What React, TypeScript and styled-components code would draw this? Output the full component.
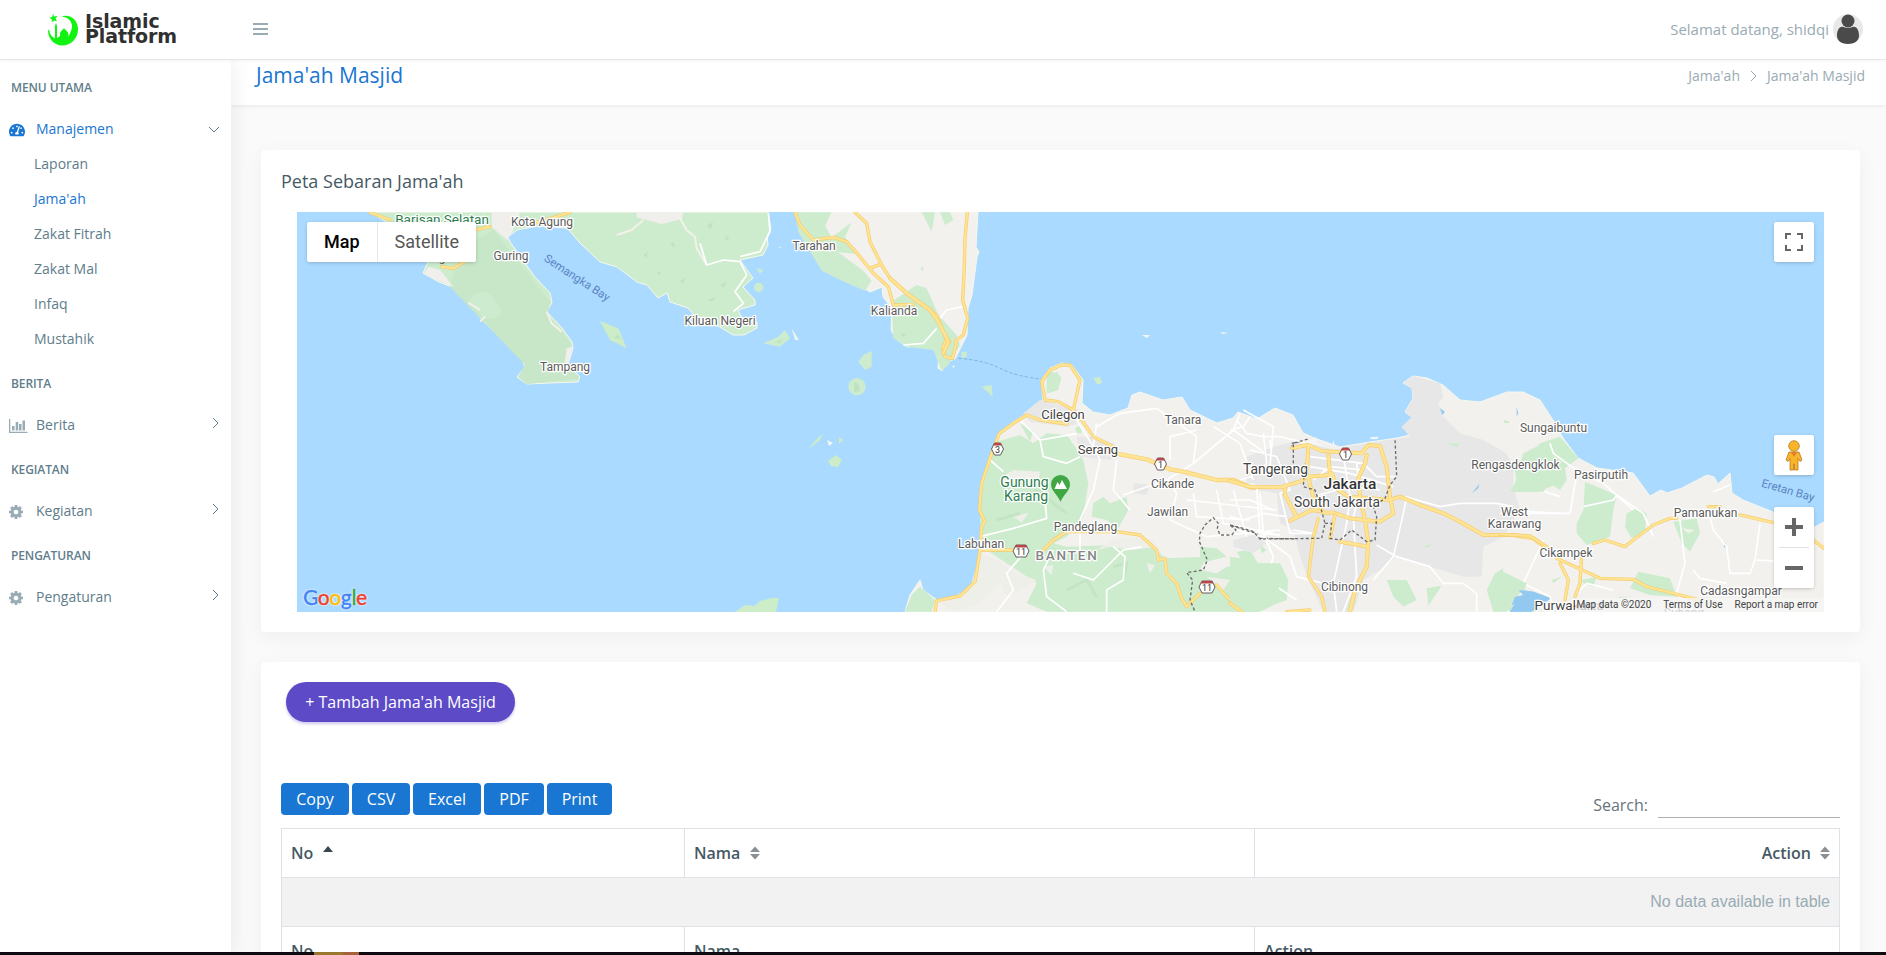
import React from "react";
import styled, { createGlobalStyle } from "styled-components";
import { FaTachometerAlt } from "react-icons/fa";

const Global = createGlobalStyle`
  * { box-sizing: border-box; }
  html, body { margin: 0; height: 955px; overflow: hidden; background: #fafafa; }
  body { font-family: "Open Sans", "Noto Sans", sans-serif; font-size: 16px; color: #455a64; }
`;

const Page = styled.div`display: flex; flex-direction: column; height: 955px; overflow: hidden;`;
const TopBar = styled.header`
  display: flex; align-items: center; height: 60px; flex: none; background: #fff; position: relative; z-index: 3;
  border-bottom: 1px solid #e6e8e9; box-shadow: 0 1px 3px rgba(0,0,0,.05);
`;
const Brand = styled.div`width: 231px; padding-left: 47px; display: flex; align-items: center; gap: 6px;`;
const BrandName = styled.div`
  font: bold 19px/15px "DejaVu Sans", sans-serif; color: #303030; letter-spacing: -.1px; white-space: pre; padding-bottom: 1px;
`;
const MenuButton = styled.button`
  border: 0; padding: 0; background: none; margin-left: 22px; width: 15px; display: grid; gap: 3px;
  margin-top: -2px;
  i { height: 2px; background: #99abb4; }
`;
const Welcome = styled.div`
  margin-left: auto; margin-right: 23px; display: flex; align-items: center; gap: 4px; color: #99abb4; font-size: 15px;
  span { padding-bottom: 2px; }
`;
const Body = styled.div`display: flex; flex: 1; min-height: 0;`;
const Sidebar = styled.nav`
  width: 231px; flex: none; background: #fff; box-shadow: 1px 0 20px rgba(0,0,0,.08); z-index: 2; padding-top: 9px;
  font-size: 14px; color: #607d8b;
`;
const Group = styled.div`height: 38px; line-height: 37px; padding-left: 11px; font-size: 12px; font-weight: 600; color: #607d8b; margin-bottom: 3px;
  letter-spacing: -.1px;`;
const Item = styled.a<{ $active?: boolean }>`
  display: grid; grid-template-columns: 27px 1fr 17px; align-items: center; height: 37px; padding: 0 6px 0 9px;
  margin-bottom: 8px; color: ${p => (p.$active ? "#1976d2" : "#607d8b")};
  .ico { color: ${p => (p.$active ? "#1976d2" : "#99abb4")}; display: block; margin-top: 3px; }
`;
const SubList = styled.div`margin-top: -9px; padding-bottom: 9px;`;
const Sub = styled.a<{ $active?: boolean }>`
  display: block; height: 35px; line-height: 35px; padding-left: 34px; color: ${p => (p.$active ? "#1976d2" : "#607d8b")};
`;
const Main = styled.main`flex: 1; min-width: 0; display: flex; flex-direction: column;`;
const TitleBar = styled.div`
  height: 45px; flex: none; background: #fff; box-shadow: 1px 0 5px rgba(0,0,0,.1); padding: 0 21px 15px 25px;
  display: flex; align-items: center; justify-content: space-between; color: #99abb4; font-size: 14px;
`;
const Title = styled.h1`margin: 0; font-size: 21px; font-weight: 400; line-height: 28px; color: #1976d2;`;
const Crumbs = styled.div`display: flex; align-items: center; gap: 10px; padding-top: 1px;`;
const Content = styled.div`padding: 45px 26px 0 30px; display: flex; flex-direction: column; gap: 30px;`;
const Card = styled.section`
  background: #fff; border-radius: 4px; box-shadow: 0 5px 20px rgba(0,0,0,.05); padding: 20px;
`;
const MapCard = styled(Card)`height: 482px;`;
const CardTitle = styled.h2`margin: 0; height: 42px; font-size: 18px; line-height: 22px; font-weight: 400; color: #455a64;`;
const MapFrame = styled.div`position: relative; margin: 0 16px; height: 400px; overflow: hidden;
  font-family: Roboto, sans-serif; > svg { display: block; }`;
const Control = styled.div`
  position: absolute; background: #fff; border-radius: 2px; box-shadow: 0 1px 4px -1px rgba(0,0,0,.3);
  display: flex; align-items: center; justify-content: center;
`;
const TypeControl = styled(Control)`left: 10px; top: 10px; height: 40px; width: 169px; font-size: 18px; color: #565656;`;
const TypeButton = styled.div<{ $on?: boolean }>`
  padding: 0 17px; line-height: 40px; font-weight: ${p => (p.$on ? 500 : 400)}; color: ${p => (p.$on ? "#000" : "#565656")};
  & + & { border-left: 1px solid #e6e6e6; }
`;
const Fullscreen = styled(Control)`right: 10px; top: 10px; width: 40px; height: 40px;`;
const Pegman = styled(Control)`right: 10px; top: 223px; width: 40px; height: 40px;`;
const Zoomer = styled(Control)`right: 10px; top: 295px; width: 40px; height: 81px;`;
const Credits = styled.div`
  position: absolute; right: 0; bottom: 0; height: 14px; display: flex; gap: 12px; padding: 0 6px 0 1px; background: rgba(245,245,245,.75);
  font-size: 10px; line-height: 14px; color: #444; white-space: nowrap;
`;
const Google = styled.div`
  position: absolute; left: 6px; bottom: 3px; font: 500 21px/24px "Lato", sans-serif; letter-spacing: -.4px;
  -webkit-text-stroke: .4px currentColor;
`;
const Letter = styled.span<{ $c: string }>`color: ${p => p.$c}; text-shadow: 0 0 2px #fff, 0 0 2px #fff, 0 0 1px #fff;`;
const TableCard = styled(Card)`height: 400px; display: flex; flex-direction: column;`;
const AddButton = styled.button`
  align-self: flex-start; margin-left: 5px; height: 40px; width: 229px; border: 0; border-radius: 20px; background: #5c4ac7; color: #fff;
  font: 16px "Open Sans", sans-serif; padding: 0; box-shadow: 0 2px 3px rgba(92,74,199,.3);
`;
const Tools = styled.div`display: flex; margin-top: 61px; height: 45px; gap: 3px;`;
const Export = styled.button<{ $w: number }>`
  width: ${p => p.$w}px; height: 32px; border: 0; border-radius: 4px; background: #1976d2; color: #fff; padding: 0; font: 16px "Open Sans", sans-serif;
`;
const Search = styled.label`margin-left: auto; display: flex; gap: 10px; line-height: 44px; height: 35px; color: #67757c;`;
const SearchLine = styled.input`width: 182px; border: 0; border-bottom: 1px solid #a9aeb0; height: 35px; background: none; outline: 0;`;
const Grid = styled.table`
  width: 1558px; border-collapse: collapse; table-layout: fixed; color: #455a64; flex: none;
  th, td { height: 49px; border: 1px solid #dee2e6; padding: 0 9px; text-align: left; font-weight: 600; }
`;
const HeadLabel = styled.div<{ $right?: boolean }>`
  display: flex; align-items: center; gap: ${p => (p.$right ? 9 : 10)}px; justify-content: ${p => (p.$right ? "flex-end" : "flex-start")};
`;
const Empty = styled.td`
  && { background: #f2f2f2; text-align: right; font: 16px "Liberation Sans", sans-serif; color: #99abb4; }
`;
const Dock = styled.div`
  position: absolute; left: 0; top: 952px; width: 1886px; height: 3px; background: #0d0b10; z-index: 9; display: flex; padding-left: 64px;
`;
const DockMark = styled.i`
  margin-left: 250px; width: 45px; background: linear-gradient(90deg, #9b762f 0 29px, #a5613a 29px);
`;

const Chevron = ({ down }: { down?: boolean }) => (
  <svg width="12" height="12" viewBox="0 0 12 12" fill="none" stroke="#607d8b" strokeWidth="1"
    style={{ marginTop: down ? 0 : -4, marginLeft: down ? 0 : 2 }}>
    <path d={down ? "M1 4l5 5 5-5" : "M3 1l5 5-5 5"} />
  </svg>
);

const Cog = () => (
  <svg className="ico" width="14" height="14" viewBox="0 128 1536 1536" fill="currentColor">
    <path d="M1024 896q0-106-75-181t-181-75-181 75-75 181 75 181 181 75 181-75 75-181zm512-109v222q0 12-8 23t-20 13l-185 28q-19 54-39 91 35 50 107 138 10 12 10 25t-9 23q-27 37-99 108t-94 71q-12 0-26-9l-138-108q-44 23-91 38-16 136-29 186-7 28-36 28h-222q-14 0-24.500-8.500t-11.500-21.500l-28-184q-49-16-90-37l-141 107q-10 9-25 9-14 0-25-11-126-114-165-168-7-10-7-23 0-12 8-23 15-21 51-66.500t54-70.500q-27-50-41-99l-183-27q-13-2-21-12.500t-8-23.500v-222q0-12 8-23t19-13l186-28q14-46 39-92-40-57-107-138-10-12-10-24 0-10 9-23 26-36 98.500-107.500t94.500-71.500q13 0 26 10l138 107q44-23 91-38 16-136 29-186 7-28 36-28h222q14 0 24.500 8.500t11.500 21.500l28 184q49 16 90 37l142-107q9-9 24-9 13 0 25 10 129 119 165 170 7 8 7 22 0 12-8 23-15 21-51 66.500t-54 70.500q26 50 41 98l183 28q13 2 21 12.500t8 23.500z" />
  </svg>
);

const Logo = () => (
  <svg width="32" height="34" viewBox="0 0 32 34" fill="#12f312">
    <path d="M6 1l1.3 2.6 3.2-.5L8.600 5.600l1.300 2.700-2.800-.9L4.700 9.300l.1-3L2.300 4.700l2.900-.6z" />
    <path d="M14 3.500C24 0 31.500 8 31 17c-.4 9-7.500 15.500-15.500 15.500C7 32.500 1.500 26 1 18l1-2c.5 5 2.500 8 6 9.500V13l1-3 1 3v12l3-2v-3c1-2.500 3-3 4-5 1 2 4 3 4.500 6v3l2-5c4-7 0-14.500-8.500-15.500z" />
  </svg>
);

const Avatar = () => (
  <svg width="30" height="32" viewBox="0 0 30 32">
    <circle cx="15" cy="15" r="15" fill="#e8e8e8" />
    <circle cx="15" cy="7" r="6.500" fill="#4a4a4a" />
    <path d="M8 13c2-1 4 1 7 1s5-2 7-1c3 1 4 5 4 9 0 5-5 8-11 8S4 27 4 22c0-4 1-8 4-9z" fill="#4a4a4a" />
  </svg>
);

const Bars = () => (
  <svg className="ico" width="19" height="14" viewBox="0 0 19 14" fill="currentColor">
    <path d="M0 0h1.300v12.700H18.500V14H0zM3 7h2.500v4.500H3zM6.700 3h2.500v8.500H6.700zM10 5h2.500v6.500H10zM13.500 1.500H16v10h-2.500z" />
  </svg>
);

const Sort = ({ asc }: { asc?: boolean }) => (
  <svg width="10" height="14" viewBox="0 0 10 14">
    <path d={asc ? "M0 6L5 0l5 6z" : "M0 6L5 .5 10 6z"} fill={asc ? "#37474f" : "#8b8f92"} />
    {!asc && <path d="M0 8h10l-5 5.500z" fill="#8b8f92" />}
  </svg>
);

/* Each sheet is drawn in its own grid at three units to the pixel. */
const Sheet = ({ x, y, children }: { x: number; y: number; children: React.ReactNode }) => (
  <g transform={`translate(${x} ${y}) scale(.33333)`}>{children}</g>
);
const Road = ({ d, w = 7 }: { d: string; w?: number }) => (
  <g fill="none" strokeLinejoin="round" strokeLinecap="round">
    <path d={d} stroke="#f5cd6c" strokeWidth={w + 3} />
    <path d={d} stroke="#ffe494" strokeWidth={w - 1} />
  </g>
);
const Lane = ({ d }: { d: string }) => <path d={d} fill="none" stroke="#fff" strokeWidth="5" strokeLinejoin="round" />;
const Border = ({ d }: { d: string }) => <path d={d} fill="none" stroke="#6b6b6b" strokeWidth="4" strokeDasharray="9 7" />;

type Place = [string, number, number, number, string?, number?];
const places: Place[] = [
  ["Barisan Selatan", 442, 224, 13.5, "#2e8050"], ["Kota Agung", 542, 225.500, 12], ["Guring", 511, 259.500, 12], ["Tampang", 565, 370.500, 12],
  ["Kiluan Negeri", 720, 324.500, 12], ["Tarahan", 814, 249.500, 12], ["Kalianda", 894, 314.500, 12], ["Cilegon", 1063, 419, 13, "#444"],
  ["Serang", 1098, 454, 13, "#444"], ["Tanara", 1183, 423.500, 12], ["Cikande", 1172.5, 487.500, 12], ["Jawilan", 1167.5, 515.500, 12],
  ["Pandeglang", 1085.500, 530.500, 12], ["Labuhan", 981, 547.500, 12], ["Tangerang", 1275.500, 474, 13.800, "#444"],
  ["Jakarta", 1350, 488.500, 15.500, "#333", 500], ["South Jakarta", 1337, 507, 13.800, "#444"], ["Cibinong", 1344.500, 590.500, 12],
  ["West", 1514.500, 515.500, 12], ["Karawang", 1514.500, 527.500, 12], ["Sungaibuntu", 1553.500, 431.500, 12],
  ["Rengasdengklok", 1515.500, 468.500, 12], ["Pasirputih", 1601, 478.500, 12], ["Pamanukan", 1705.500, 516.500, 12],
  ["Cikampek", 1566, 556.500, 12], ["Cadasngampar", 1741, 594.500, 12], ["Purwakarta", 1569, 610, 13.500, "#444"], ["Subang", 1684, 617, 12],
  ["Gunung", 1024.500, 486.500, 14, "#2e8050"], ["Karang", 1026, 500.500, 14, "#2e8050"],
];

const Shield = ({ x, y, n }: { x: number; y: number; n: string }) => {
  const w = n.length > 1 ? 8 : 6;
  return (
    <g>
      <path d={`M${x - w + 3} ${y - 6}h${2 * w - 6}l3 6-3 6h-${2 * w - 6}l-3-6z`} fill="#fff" stroke="#665a5a" strokeWidth="1" />
      <path d={`M${x - w + 3} ${y - 6}h${2 * w - 6}l1.500 2.500H${x - w + 1.500}z`} fill="#b9474a" />
      <text x={x} y={y + 4} fontSize="9" textAnchor="middle" fill="#333">{n}</text>
    </g>
  );
};

const MapArt = () => (
  <svg width="1527" height="400" viewBox="297 212 1527 400">
    <rect x="297" y="212" width="1527" height="400" fill="#aadaff" />
    <g stroke="#f7f8ee" strokeWidth="1" strokeLinejoin="round">
      <path fill="#cdecce" d="M370 212 385 221 428 262 423 273 439 282 452 287 468 302 482 320 503 340 520 355 525 367 517 377 527 384 550 383 578 382 580 377 568 365 573 348 572 342 562 328 547 312 552 302 550 293 535 277 525 263 510 242 508 237 517 230 537 226 567 228 580 243 600 262 617 267 637 282 647 285 658 298 667 293 670 302 688 308 700 322 718 326 733 335 744 335 757 328 757 322 742 318 738 310 755 305 755 300 743 287 753 278 740 260 763 255 768 245 767 236 771 228 768 212Z" />
      <path fill="#f2f1ee" d="M795 212 799 224 813 243 828 267 847 277 870 292 882 287 883 297 892 308 891 330 897 340 907 347 920 346 933 349 939 354 938 368 942 371 947 362 955 359 967 335 968 308 972 295 977 257 979 252 976 247 978 212Z" />
      <path fill="#f2f1ee" d="M905 612 910 595 920 580 923 590 937 600 960 595 975 580 980 550 983 522 979 510 982 483 992 453 999 433 1013 422 1027 413 1043 400 1041 380 1050 368 1062 363 1072 365 1083 380 1082 403 1093 412 1110 415 1128 408 1132 395 1140 392 1163 400 1182 397 1190 410 1217 423 1233 418 1238 412 1257 419 1275 408 1293 415 1303 433 1317 439 1340 447 1370 442 1397 438 1410 435 1402 427 1410 425 1412 417 1405 412 1413 398 1412 388 1403 383 1413 376 1427 378 1443 385 1460 400 1480 402 1507 392 1523 392 1540 400 1553 420 1563 438 1578 458 1597 468 1633 473 1650 496 1661 490 1667 493 1682 488 1707 475 1714 477 1718 484 1730 473 1732 493 1743 500 1773 512 1813 528 1824 522 1824 612Z" />
    </g>
    <Sheet x={290} y={205}>
      <path fill="#c8e6c8" d="M500 180 550 110 610 75 780 290 775 330 845 420 820 470 870 520 710 538 685 515 705 480 480 245Z" />
      <path fill="#cdebcf" d="M535 285Q580 235 620 290T580 340Z" />
      <path fill="#f0efec" d="M415 185 450 195 490 245 400 208ZM605 22 690 22 670 75 650 105 605 65ZM1040 22h140l-5 20-60 15-75-20ZM830 430 848 425 840 460 832 480 825 465Z" />
      <path fill="#cdecc8" d="M930 348 985 370 1010 430 960 405Z" />
      <path fill="#bfe3c0" d="M1100 205l10-8 4 14ZM1170 230l12-12 2 16ZM1060 150l14-10-4 18ZM1140 120l10-10 6 16ZM970 400l14-12 8 14Z" />
      <path fill="none" stroke="#f3f1e9" strokeWidth="6" d="M535 293 570 315M570 350 585 335M770 320 785 355 815 380M1060 45 1025 75 980 90M1160 22 1190 75 1215 95 1220 130 1250 180" />
      <Road d="M240 22 300 45 M555 75 600 65M455 185 490 190 540 160M730 55 800 35 840 22" />
    </Sheet>
    <Sheet x={700} y={205}>
      <g fill="#cdecce">
        <path d="M285 22h110l-20 40 20 35 60-45-20 45 40 50-60-5 75 55 25 30-20 30-60-25-70-35-70-115ZM575 290 650 240 680 250 715 330 770 390 780 420 745 480 725 498 700 435 620 425 580 400ZM665 22 695 80 705 22ZM720 22 735 60 760 45 750 22ZM660 190l10-5 0 15Z" />
        <path d="M1040 500 1060 500 1083 520 1075 555 1045 565Z" />
        <path d="M190 415 235 395 255 375 270 400 240 425ZM475 470 490 450 515 438 515 485 495 495ZM845 545 875 540 878 575ZM785 440h15v15l-15 5ZM1180 518l20-3 7 18-15 6ZM170 190l20 5-10 12Z" />
        <circle cx="471" cy="545" r="26" /><circle cx="176" cy="247" r="14" />
      </g>
      <path fill="#bfe3c0" d="M462 530l14 8 4 20-18 4ZM225 412l22-10-6 14Z" />
      <g fill="#eef5e8"><path d="M275 370 297 405 285 405ZM235 125l8 2-4 4ZM757 483l8-2-5 10Z" /></g>
      <g fill="#bfe3c0"><path d="M20 60l20-8-8 20ZM70 110l14-20 4 10ZM60 240l20-10-8 18ZM20 290l20-14 4 10ZM600 385l20 2-10 8Z" /></g>
      <Lane d="M0 115 20 180 70 165 120 170 140 210 105 260 130 295 100 320M205 25 210 80 180 140 120 155M720 340 740 315 790 305M610 420 670 415 710 370" />
      <Road d="M285 22 300 60 340 105 400 97 440 110 480 155 520 205 565 245 580 300 640 298M465 22 500 55 510 110 545 180 570 220 620 265 710 330 735 395 750 410M740 400 728 430 735 455 758 460 770 405 790 390 803 340 788 285 793 185 795 100 802 22M510 190 540 178" />
      <Road w={9} d="M570 220 620 265 690 315 715 350 745 410 730 445" />
      <path fill="none" stroke="#80b3d5" strokeWidth="3" strokeDasharray="10 6" d="M775 460Q850 465 900 490T1025 522" />
    </Sheet>
    <Sheet x={880} y={350}>
      <g fill="#cdecce">
        <path d="M350 275 385 265 420 255 460 280 500 250 560 255 585 290 610 330 625 400 610 500 560 560 480 600 400 605 310 595 300 560 300 480 305 400 335 310ZM75 785 95 735 120 710 165 750 155 785ZM500 85 530 65 545 85 530 120 500 130ZM420 220 460 245 450 275ZM585 235l20-10v25h-15Z" />
        <path d="M320 600 450 560 560 590 700 585 820 590 855 625 980 620 960 660 1010 670 1040 650 1120 640 1200 640 1225 690 1220 750 1130 785 500 785 440 760 470 700ZM640 460 670 440 690 460 740 440 745 480 715 535 680 510 635 500ZM960 590 1010 595 1040 620 960 640ZM1070 605 1110 600 1140 650 1090 640ZM440 500 480 490 470 520Z" />
      </g>
      <g fill="#efefea">
        <path d="M365 380 400 360 480 365 475 400 370 395ZM300 610 350 630 410 670 470 690 440 710 380 740 360 700 300 760 230 785 180 760 270 715ZM650 600 700 570 770 560 820 570 830 590 760 600 690 590ZM980 680 1050 690 1030 720ZM490 650l30-5-5 30ZM800 640l25 5-15 25ZM400 500l45-12-20 30Z" />
      </g>
      <g fill="#e7e7e7">
        <path d="M430 190 480 150 600 180 600 220 560 230 450 215ZM590 260 640 260 700 280 720 310 690 330 600 320ZM1100 320 1180 290 1260 270 1260 400 1100 400ZM760 400l50 5-10 30-40-5ZM1060 570 1120 555 1160 580 1120 610 1060 590Z" />
      </g>
      <path fill="none" stroke="#bfe2c1" strokeWidth="9" opacity=".7" d="M440 440 470 420 520 460 560 490M700 650 740 640 730 690M560 720 620 690 650 740M1070 700 1130 680 1180 720M350 510 420 490" />
      <Lane d="M420 210 480 270 540 260 590 250M480 270 490 320 560 340 600 320M330 330 370 365M300 560 400 535 500 505 490 400M650 220 640 290 660 330 640 420 600 510M650 230 720 190 830 175 950 260 940 340 860 390 730 435M710 330 700 420 750 480M940 340 1060 240 1080 190M1060 240 1170 320 1190 410M860 390 890 430 870 510 980 560 1200 540M1000 230 1080 280 1120 390M600 530 600 600M520 600 490 660 500 740 560 785M700 590 735 620 730 690 680 720 680 785M785 590 730 600 640 690 580 670M1010 420 1030 520 1180 550M1060 420 1100 560M940 430 950 500 1110 510M920 450 1190 480M1140 430 1150 550 1180 620 1160 690 1250 750M870 330 870 260 950 240M640 290 590 210M440 600 380 670 400 720 350 785M1170 270 1175 360 1080 390" />
      <Road d="M165 785 170 752 240 738 285 695 300 600 305 530 315 515 298 480 305 400 335 310 358 250 400 220 440 195 480 210 560 222 580 180 600 90 570 45 545 45 510 60 485 95 495 150 535 155 580 180 605 210 640 260 700 290M300 600 400 600M490 600 520 570 560 545 710 545 780 555 830 600 835 630 855 625 860 670 890 700 905 745 920 770 960 730M1010 705 1035 735 1090 785" />
      <Road w={10} d="M705 310 800 328 870 358 910 365 1010 390 1060 390 1110 412 1180 415 1260 400" />
      <Border d="M1260 275 1235 280 1240 340M1260 567 1140 565 1130 550 1110 545 1050 525 1068 540 1055 555 1020 555 1012 535 1015 520 1000 503 975 525 960 550 958 575 965 590 982 630 970 660 920 668 938 690 930 750 945 785" />
    </Sheet>
    <Sheet x={1230} y={350}>
      <path fill="#e7e7e7" d="M60 345 110 300 180 290 235 275 310 300 350 290 440 275 540 260 515 230 545 200 525 185 548 145 545 115 520 100 550 78 630 100 640 140 625 160 640 200 690 250 760 270 830 310 850 350 850 410 870 480 820 560 760 590 755 680 700 680 600 650 500 620 450 660 400 690 370 785 280 785 240 700 210 620 190 540 150 520 140 430 80 420Z" />
      <g fill="#cdecce"><path d="M990 260 930 280 890 325 850 340 860 390 840 425 920 425 990 400ZM0 620 30 625 80 640 130 640 150 690 140 760 90 785 30 785 0 750ZM470 690 530 690 560 750 520 770 490 740ZM795 670 820 655 810 710 880 720 850 750 830 785 790 785 770 720ZM650 280l40 0-10 12ZM820 210l20 8-15 2ZM360 745l20 10-30 30ZM580 590l25-8-10 12ZM90 585l20 15-15 10ZM590 715l45-8-40 60Z" /></g>
      <path fill="#93c9f1" d="M725 430 748 402 745 415ZM840 775 855 740 880 735 865 718 910 725 965 745 900 785 840 785ZM630 175l15 10-8 10Z" />
      <path fill="#f4f7fa" d="M420 262l25-2-2 7-20 1ZM230 265l15 7 15-12-4 15 30 15-60-10ZM310 270l5 20-8-5Z" />
      <Lane d="M0 240 40 230 60 200M20 210 50 250 100 260 150 260 230 280M100 250 110 340 80 370M60 300 140 320 180 420 150 430 180 550 250 550M0 450 60 450 130 480M0 500 40 510 100 490 170 500M80 410 90 550 150 555M20 540 100 560 180 620 200 680 280 700M240 320 400 340 440 380 500 380M240 350 360 370 490 410M340 320 360 440 350 520 310 700 320 785M380 340 390 430 370 500 380 680 340 785M530 440 520 490 490 620 430 690M525 440 630 470 690 460 800 460 850 470M440 585 500 620 600 650 640 700 700 700 740 730 740 785M190 540 250 550 270 500M820 480 990 490M40 180 130 230 120 350M880 330 930 310M870 400 990 440M250 390 300 350 400 360M265 435 360 410 450 420M940 570 880 700 960 740 970 785" />
      <Road w={9} d="M0 393 60 410 150 412 210 395 230 380 235 285 275 303 395 310 415 285 450 288 470 350 480 440 490 490 450 515 360 505 310 488 280 488 250 440 240 405 235 380 300 375 295 315M165 415 165 435 200 500 180 512 245 480 280 485M410 315 405 340 385 385 390 440 405 510 415 580 410 650 375 720 360 785M330 575 415 590M185 295 230 285M305 370 325 420 355 440 420 445 480 450 510 440 570 465 640 490 690 515 760 555 850 555 910 565 950 595" />
      <Road d="M0 760 35 785M170 785 240 780M265 505 250 560 235 680 275 740 285 785M300 565 315 495" />
      <Border d="M190 340 190 280 240 265M0 525 40 535 70 545 90 567 275 565 285 520 270 465 255 420 220 410 225 340M285 520 305 520 300 565 330 570 365 540 410 575 435 570 440 500 430 470 465 445 480 405 500 380 495 265" />
    </Sheet>
    <Sheet x={1500} y={350}>
      <g fill="#cdecce">
        <path d="M180 260 235 325 195 355 200 390 180 420 150 400 130 425 40 425 50 380 70 310 130 280ZM255 395 350 435 340 480 330 560 260 585 230 550 230 520 250 480ZM410 475 440 490 435 545 395 565 375 530 380 490ZM520 515 590 505 600 550 570 605 545 580ZM415 665 510 685 530 740 450 735 390 715ZM0 660 80 700 70 730 30 715 0 720ZM0 780 110 785 95 740ZM245 690 290 680 280 710 250 700ZM355 740h35l-35 4ZM155 690l30-10-25 20ZM10 210l20 5-15 5Z" />
      </g>
      <path fill="#93c9f1" d="M30 785 50 750 80 745 55 720 100 725 150 745 95 785ZM672 580h5v12h-5ZM50 170l5 20-5 10Z" />
      <path fill="#eff2e9" d="M545 535 585 540 565 550Z" />
      <Lane d="M150 280 160 310 235 365 225 400 210 490 120 490M250 470 340 450 350 435 430 490 460 560M235 365 310 400 400 480M540 510 555 640 530 730 580 785M630 500 640 540 680 590 690 670 750 670 765 630 780 520M580 660 600 685 680 700M770 630 930 640M230 730 260 700 340 720M640 425 690 405M0 490 120 490" />
      <Road d="M720 495 820 518M940 570 972 595M0 553 90 558 140 590 165 620M280 580 315 570 375 590 400 570 460 525 510 505 530 505M170 625 300 685 400 688 440 710 520 730 590 748M180 640 205 690 195 750M245 620 240 700 225 740M625 470 660 470" />
    </Sheet>
    <g fill="#cdecc8">
      <path d="M809 448 815 441 822 434 820 440 811 447ZM828 461 836 455 842 460 838 467 831 466Z" />
      <path d="M735 612 745 605 754 606 760 601 772 598 779 598 776 612ZM839 437l4 3-4 4Z" />
      <path fill="#f4f7f0" d="M827 440l6 3-4 3ZM1142 335h8l-3 3ZM1220 332l8 1-5 1Z" />
    </g>
    <g fontFamily="Roboto, sans-serif" textAnchor="middle" stroke="#fff" strokeWidth="2.500" strokeLinejoin="round" style={{ paintOrder: "stroke" }}>
      {places.map(([name, x, y, size, fill = "#5b5b5b", weight = 400]) => (
        <text key={name} x={x} y={y} fontSize={size} fill={fill} fontWeight={weight}>{name}</text>
      ))}
      <text x="1067" y="560" fontSize="13.500" fontWeight="500" letterSpacing="1.800" fill="#868686">BANTEN</text>
    </g>
    <g fontFamily="Roboto, sans-serif" fontSize="11.500" fill="#5b84c4" textAnchor="middle">
      <text transform="translate(575 281) rotate(33)">Semangka Bay</text>
      <text transform="translate(1787 494) rotate(16)">Eretan Bay</text>
      <text x="442" y="262" fill="#5b5b5b">g</text>
    </g>
    <Shield x={997.500} y={449} n="3" /><Shield x={1160.500} y={464} n="1" /><Shield x={1345.500} y={454} n="1" />
    <Shield x={1021} y={551} n="11" /><Shield x={1207} y={587} n="11" />
    <path d="M1060.500 502C1058 495 1051 491 1051 484.500a9.500 9.500 0 0 1 19 0C1070 491 1063 495 1060.500 502Z" fill="#40a744" />
    <path d="M1054.500 489l3-7 2 3 2.500-5 5 9Z" fill="#fff" />
  </svg>
);

const googleLetters: [string, string][] = [["G", "#4285f4"], ["o", "#ea4335"], ["o", "#fbbc05"], ["g", "#4285f4"], ["l", "#34a853"], ["e", "#ea4335"]];
const subItems = ["Laporan", "Jama'ah", "Zakat Fitrah", "Zakat Mal", "Infaq", "Mustahik"];
const exportButtons: [string, number][] = [["Copy", 68], ["CSV", 58], ["Excel", 68], ["PDF", 60], ["Print", 65]];

export default function App() {
  return (
    <>
      <Global />
      <Page>
        <TopBar>
          <Brand><Logo /><BrandName>{"Islamic\nPlatform"}</BrandName></Brand>
          <MenuButton aria-label="Menu"><i /><i /><i /></MenuButton>
          <Welcome><span>Selamat datang, shidqi</span><Avatar /></Welcome>
        </TopBar>
        <Body>
          <Sidebar>
            <Group>MENU UTAMA</Group>
            <Item $active><FaTachometerAlt className="ico" size={16} />Manajemen<Chevron down /></Item>
            <SubList>
              {subItems.map(s => <Sub key={s} $active={s === "Jama'ah"}>{s}</Sub>)}
            </SubList>
            <Group>BERITA</Group>
            <Item><Bars />Berita<Chevron /></Item>
            <Group>KEGIATAN</Group>
            <Item><Cog />Kegiatan<Chevron /></Item>
            <Group>PENGATURAN</Group>
            <Item><Cog />Pengaturan<Chevron /></Item>
          </Sidebar>
          <Main>
            <TitleBar>
              <Title>Jama'ah Masjid</Title>
              <Crumbs>
                <span>Jama'ah</span>
                <svg width="7" height="12" viewBox="0 0 7 12" fill="none" stroke="#99abb4"><path d="M1 1l5 5-5 5" /></svg>
                <span>Jama'ah Masjid</span>
              </Crumbs>
            </TitleBar>
            <Content>
              <MapCard>
                <CardTitle>Peta Sebaran Jama'ah</CardTitle>
                <MapFrame>
                  <MapArt />
                  <TypeControl><TypeButton $on>Map</TypeButton><TypeButton>Satellite</TypeButton></TypeControl>
                  <Fullscreen>
                    <svg width="18" height="18" viewBox="0 0 18 18" fill="#666"><path d="M0 0v6h2V2h4V0zM16 0h-4v2h4v4h2V0zM16 16h-4v2h6v-6h-2zM2 12H0v6h6v-2H2z" /></svg>
                  </Fullscreen>
                  <Pegman>
                    <svg width="18" height="31" viewBox="0 0 18 31" fill="#f9b529" stroke="#b87a23" strokeWidth=".8">
                      <path d="M4 12h10l3 8-2 1.500-2-3V30H9.500v-6h-1v6H5V18.500l-2 3L1 20z" />
                      <path d="M5.500 12l3.500 5 3.500-5z" fill="#e28227" stroke="none" />
                      <circle cx="9" cy="6" r="5.300" />
                    </svg>
                  </Pegman>
                  <Zoomer>
                    <svg width="30" height="81" viewBox="0 0 30 81" fill="#666">
                      <path d="M13 11h4v7h7v4h-7v7h-4v-7H6v-4h7zM6 59h18v4H6z" /><path d="M0 40h30v1H0z" fill="#e0e0e0" />
                    </svg>
                  </Zoomer>
                  <Google>{googleLetters.map(([l, c], i) => <Letter key={i} $c={c}>{l}</Letter>)}</Google>
                  <Credits><span>Map data ©2020</span><span>Terms of Use</span><span>Report a map error</span></Credits>
                </MapFrame>
              </MapCard>
              <TableCard>
                <AddButton>+ Tambah Jama'ah Masjid</AddButton>
                <Tools>
                  {exportButtons.map(([name, w]) => <Export key={name} $w={w}>{name}</Export>)}
                  <Search>Search:<SearchLine /></Search>
                </Tools>
                <Grid>
                  <colgroup><col width="403" /><col width="570" /><col width="585" /></colgroup>
                  <thead>
                    <tr>
                      <th><HeadLabel>No<Sort asc /></HeadLabel></th>
                      <th><HeadLabel>Nama<Sort /></HeadLabel></th>
                      <th><HeadLabel $right>Action<Sort /></HeadLabel></th>
                    </tr>
                  </thead>
                  <tbody><tr><Empty colSpan={3}>No data available in table</Empty></tr></tbody>
                  <tfoot><tr><th>No</th><th>Nama</th><th>Action</th></tr></tfoot>
                </Grid>
              </TableCard>
            </Content>
          </Main>
        </Body>
        <Dock><DockMark /></Dock>
      </Page>
    </>
  );
}
